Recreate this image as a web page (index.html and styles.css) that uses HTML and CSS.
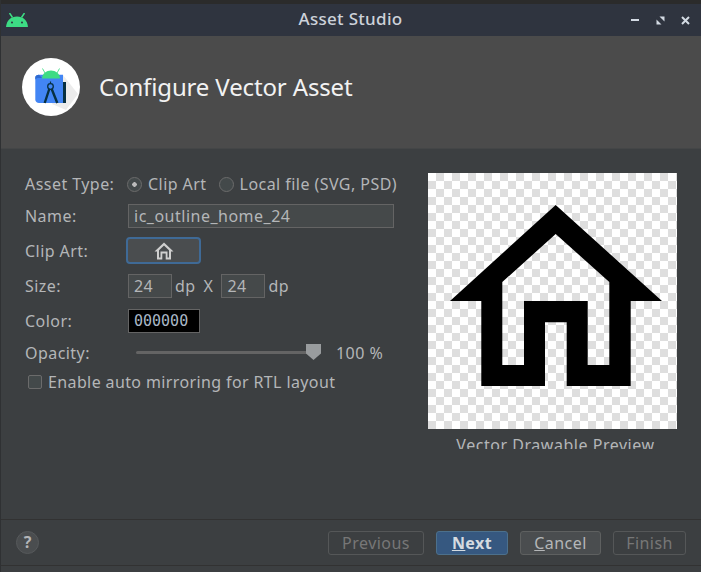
FILE: index.html
```html
<!DOCTYPE html>
<html lang="en">
<head>
  <meta charset="UTF-8" />
  <title>Asset Studio</title>
  <link rel="stylesheet" href="styles.css">
</head>
<body>
  <div class="topstrip"></div>

  <div class="titlebar">
    <svg class="droid" viewBox="0 0 22 14" width="22" height="14">
      <path d="M3.500 0 L6.500 4.500 M18.500 0 L15.500 4.500" stroke="#3ddc84" stroke-width="1.500" fill="none"/>
      <path d="M0 14 C0.500 7.500 5 3.500 11 3.500 C17 3.500 21.500 7.500 22 14 Z" fill="#3ddc84"/>
      <circle cx="6" cy="9.500" r="1" fill="#2f343f"/>
      <circle cx="16" cy="9.500" r="1" fill="#2f343f"/>
    </svg>
    <span class="title">Asset Studio</span>
    <div class="winbtns">
      <svg viewBox="0 0 9 9" width="9" height="9"><rect x="0" y="3" width="8" height="2" fill="#d3dae3"/></svg>
      <svg viewBox="0 0 9 9" width="9" height="9"><path d="M3.500 0.500 H8.500 V5.500 Z M0.500 3.500 V8.500 H5.500 Z" fill="#d3dae3"/></svg>
      <svg viewBox="0 0 9 9" width="9" height="9"><path d="M1 1 L8 8 M8 1 L1 8" stroke="#d3dae3" stroke-width="2"/></svg>
    </div>
  </div>

  <header class="banner">
    <div class="logo">
      <svg viewBox="0 0 58 58" width="58" height="58">
        <path d="M41 17 L56 36 L44 52 L30 46 Z" fill="#ececec"/>
        <path d="M13.300 19.500 C13.300 17.500 15 16.700 17 16.700 H41 V45 H17 C15 45 13.300 43.500 13.300 42 Z" fill="#4285f4"/>
        <path d="M13.300 19.500 C13.300 17.500 15 16.700 17 16.700 L20 20 H16 C14.500 20 13.300 21 13.300 22 Z" fill="#2f6ad0"/>
        <rect x="41" y="24" width="3" height="21" fill="#073042"/>
        <path d="M23 15 L20.500 10.500 M35 15 L37.500 10.500" stroke="#3ddc84" stroke-width="0.900"/>
        <path d="M20 20.500 C20 15.500 24.500 12.500 29 12.500 C33.500 12.500 38 15.500 38 20.500 Z" fill="#3ddc84"/>
        <circle cx="28.500" cy="28.500" r="2.800" fill="none" stroke="#073042" stroke-width="1.300"/>
        <path d="M27.300 31 L22.700 45 M29.700 31 L35.300 45" stroke="#073042" stroke-width="2.400"/>
        <path d="M28.500 23.500 V26" stroke="#073042" stroke-width="1.200"/>
      </svg>
    </div>
    <h1>Configure Vector Asset</h1>
  </header>

  <main class="content">
    <form class="fields">
      <div class="row row-type">
        <label class="lbl">Asset Type:</label>
        <span class="radio on"></span><span class="opt">Clip Art</span>
        <span class="radio second"></span><span class="opt">Local file (SVG, PSD)</span>
      </div>
      <div class="row row-name">
        <label class="lbl">Name:</label>
        <div class="input wide">ic_outline_home_24</div>
      </div>
      <div class="row row-clip">
        <label class="lbl">Clip Art:</label>
        <button type="button" class="clipbtn">
          <svg viewBox="0 0 20 18" width="20" height="18">
            <path fill-rule="evenodd" fill="#cfcfcf" d="M10 0.500 L19.500 9.500 H17 V17.500 H11.700 V11.500 H8.300 V17.500 H3 V9.500 H0.500 Z M10 3.500 L5 8.300 V15.500 H6.500 V9.500 H13.500 V15.500 H15 V8.300 Z"/>
          </svg>
        </button>
      </div>
      <div class="row row-size">
        <label class="lbl">Size:</label>
        <div class="input small">24</div><span class="unit">dp</span>
        <span class="x">X</span>
        <div class="input small">24</div><span class="unit">dp</span>
      </div>
      <div class="row row-color">
        <label class="lbl">Color:</label>
        <div class="input swatch">000000</div>
      </div>
      <div class="row row-opacity">
        <label class="lbl">Opacity:</label>
        <div class="slider"><span class="thumb"></span></div>
        <span class="pct">100 %</span>
      </div>
      <div class="row row-check">
        <span class="check"></span>
        <span class="check-text">Enable auto mirroring for RTL layout</span>
      </div>
    </form>

    <div class="preview-col">
      <div class="preview">
        <svg viewBox="0 0 249 256" width="249" height="256">
          <path fill-rule="evenodd" fill="#000" d="M127.700 32 L234 128 H202.700 V213 H138.700 V149.300 H117 V213 H53.300 V128 H22 Z M127.700 61 L74.300 109 V192 H96 V128 H159.700 V192 H181.300 V109 Z"/>
        </svg>
      </div>
      <div class="caption">Vector Drawable Preview</div>
    </div>
  </main>

  <footer class="actions">
    <span class="help">?</span>
    <div class="buttons">
      <span class="btn off b-prev">Previous</span>
      <span class="btn primary b-next"><u>N</u>ext</span>
      <span class="btn b-cancel"><u>C</u>ancel</span>
      <span class="btn off b-finish">Finish</span>
    </div>
  </footer>
</body>
</html>
```

FILE: styles.css
```css
* {
  box-sizing: border-box;
}

body {
  margin: 0;
  width: 701px;
  height: 572px;
  overflow: hidden;
  display: flex;
  flex-direction: column;
  background-color: #3c3f41;
  border-left: 1px solid #2f3133;
  font-family: "Noto Sans", "Open Sans", sans-serif;
  font-size: 16px;
  letter-spacing: 0.45px;
  color: #b4b6b8;
}

.topstrip {
  height: 4px;
  margin-left: -1px;
  background-color: #2b2b2b;
}

.titlebar {
  height: 32px;
  margin-left: -1px;
  padding: 9px 0 0 6px;
  display: flex;
  align-items: flex-start;
  background-color: #2f343f;
  position: relative;
}

.title {
  position: absolute;
  left: 0;
  right: 0;
  top: 3px;
  text-align: center;
  font-size: 17px;
  font-weight: 500;
  letter-spacing: 0.3px;
  color: #cdd2da;
}

.winbtns {
  margin-left: auto;
  margin-right: 11px;
  padding-top: 3px;
  display: flex;
  gap: 16px;
}

.winbtns svg {
  display: block;
}

.banner {
  height: 113px;
  padding: 22px 0 0 21px;
  display: flex;
  align-items: flex-start;
  gap: 19px;
  background-color: #4b4b4b;
  border-bottom: 1px solid #444647;
}

.logo {
  width: 58px;
  height: 58px;
  border-radius: 50%;
  overflow: hidden;
  background-color: #fff;
}

.logo svg {
  display: block;
}

.banner h1 {
  margin: 11px 0 0;
  font-size: 24px;
  font-weight: 400;
  letter-spacing: -0.14px;
  line-height: 36px;
  color: #f2f2f2;
}

.content {
  flex: 1;
  display: flex;
  overflow: hidden;
  padding: 24px 0 0 24px;
}

.fields {
  width: 403px;
}

.row {
  display: flex;
  align-items: center;
}

.lbl {
  width: 103px;
  flex: none;
}

.row-type { height: 22px; }
.row-name { height: 24px; margin-top: 9px; }
.row-clip { height: 27px; margin-top: 9px; }
.row-size { height: 24px; margin-top: 10px; }
.row-color { height: 24px; margin-top: 11px; }
.row-opacity { height: 24px; margin-top: 8px; }
.row-check { height: 22px; margin-top: 6px; padding-left: 3px; }

.radio {
  width: 15px;
  height: 15px;
  flex: none;
  border: 1px solid #6b6b6b;
  border-radius: 50%;
  background-color: #43494a;
  margin: 0 6px 0 -1px;
}

.radio.on {
  background: radial-gradient(circle, #bbbbbb 0 2px, #43494a 2.500px);
}

.radio.second {
  margin-left: 12px;
}

.opt {
  white-space: nowrap;
}

.input {
  height: 24px;
  padding-left: 5px;
  line-height: 22px;
  border: 1px solid #646464;
  background-color: #45494a;
}

.wide {
  width: 266px;
  letter-spacing: 0.5px;
}

.small {
  width: 44px;
}

.unit {
  margin-left: 3px;
}

.x {
  margin: 0 8px 0 8px;
}

.swatch {
  width: 72px;
  background-color: #000;
  font-family: "DejaVu Sans Mono", "Liberation Mono", monospace;
  font-size: 15px;
  letter-spacing: 0;
  color: #a9b7c6;
}

.clipbtn {
  width: 75px;
  height: 27px;
  margin-left: -2px;
  padding: 0;
  display: flex;
  align-items: center;
  justify-content: center;
  border: 2px solid #3f6a96;
  border-radius: 4px;
  background-color: #4a4d4f;
}

.slider {
  position: relative;
  width: 178px;
  height: 3px;
  margin: -1px 0 0 8px;
  background-color: #646464;
  border-radius: 2px;
}

.thumb {
  position: absolute;
  right: -7px;
  top: -7px;
  width: 15px;
  height: 16px;
  background-color: #999c9e;
  clip-path: polygon(0 0, 100% 0, 100% 60%, 50% 100%, 0 60%);
}

.pct {
  margin-left: 22px;
}

.check {
  width: 14px;
  height: 14px;
  margin-right: 6px;
  flex: none;
  border: 1px solid #6b6b6b;
  border-radius: 2px;
  background-color: #43494a;
}

.check-text {
  letter-spacing: 0.38px;
}

.preview-col {
  height: 276px;
  overflow: hidden;
  width: 249px;
}

.preview {
  height: 256px;
  background: repeating-conic-gradient(#dedede 0 25%, #fff 0 50%) 0 0 / 16px 16px;
}

.preview svg {
  display: block;
}

.caption {
  margin: 5px -10px 0;
  padding-left: 6px;
  text-align: center;
  white-space: nowrap;
  letter-spacing: 0.53px;
  line-height: 22px;
}

.actions {
  height: 47px;
  padding: 0 15px 0 15px;
  display: flex;
  align-items: center;
  border-top: 1px solid #323232;
  border-bottom: 1px solid #323232;
  margin-bottom: 6px;
}

.help {
  width: 23px;
  height: 23px;
  border-radius: 50%;
  background-color: #4a4d4f;
  border: 1px solid #56595b;
  color: #b4b6b8;
  font-size: 16px;
  font-weight: 700;
  letter-spacing: 0;
  line-height: 21px;
  text-align: center;
}

.buttons {
  margin-left: auto;
  display: flex;
  gap: 12px;
}

.btn {
  height: 24px;
  line-height: 22px;
  text-align: center;
  border: 1px solid #5e6060;
  border-radius: 3px;
  background-color: #4a4d4f;
}

.off {
  background-color: transparent;
  border-color: #555758;
  color: #777777;
}

.primary {
  background-color: #365880;
  border-color: #4c708c;
  color: #d5dbe0;
  font-weight: 700;
}

.b-prev { width: 96px; }
.b-next { width: 72px; }
.b-cancel { width: 81px; }
.b-finish { width: 73px; }
```
